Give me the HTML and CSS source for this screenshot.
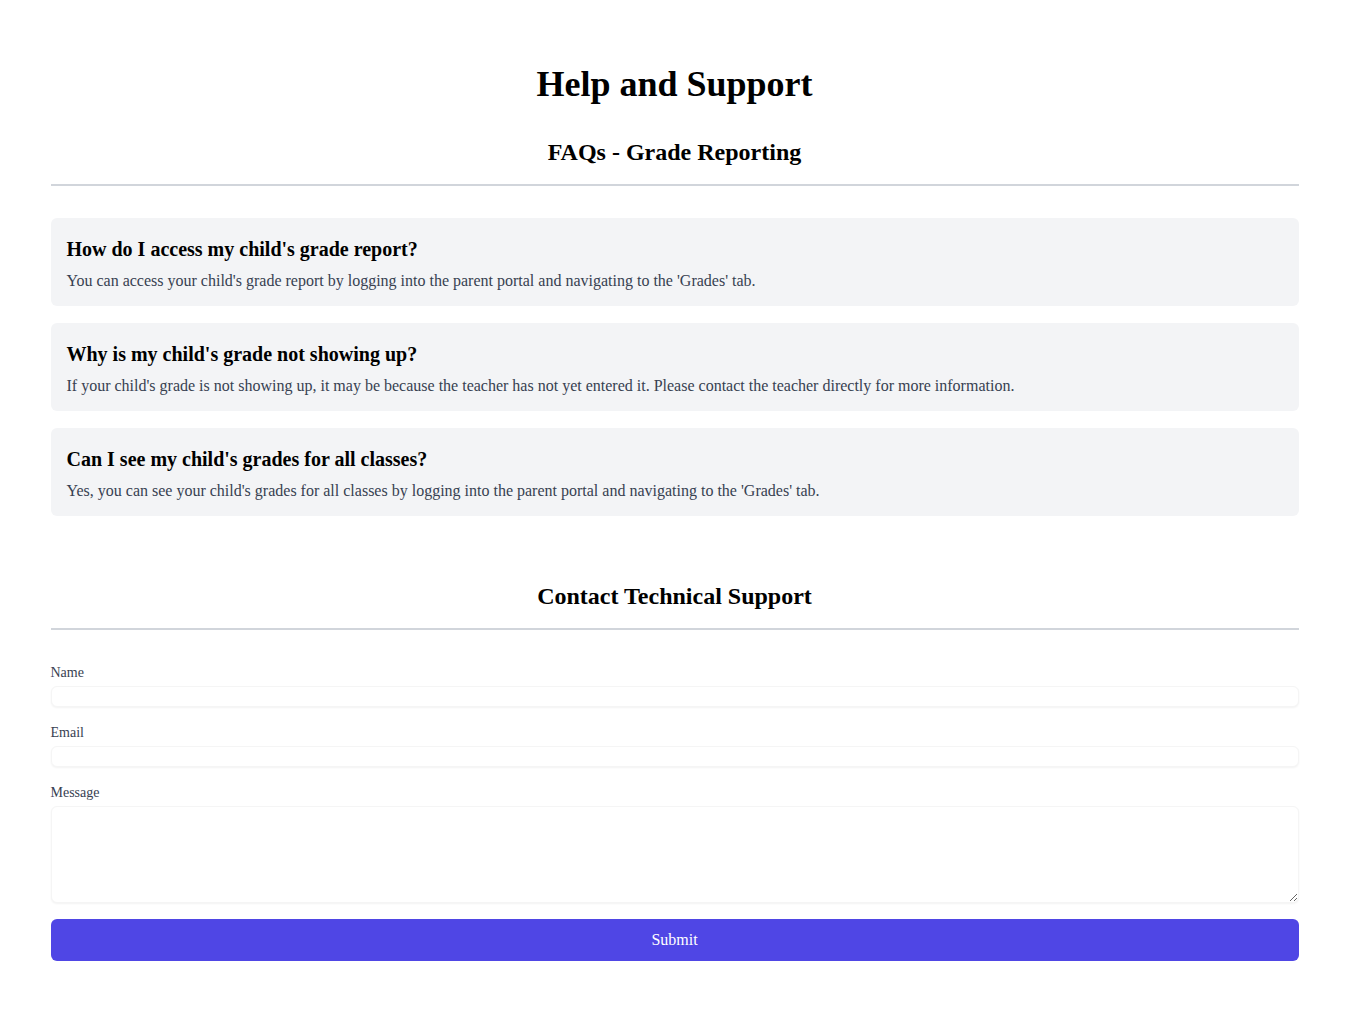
FILE: index.html
```html
<!DOCTYPE html>
<html lang="en">
<head>
<meta charset="utf-8">
<title>Help and Support</title>
<link rel="stylesheet" href="styles.css">
</head>
<body>
<main class="container">
  <h1 class="page-title">Help and Support</h1>

  <section class="section section-faq">
    <h2 class="section-title">FAQs - Grade Reporting</h2>
    <div class="faq-list">
      <div class="faq">
        <h3 class="faq-q">How do I access my child's grade report?</h3>
        <p class="faq-a">You can access your child's grade report by logging into the parent portal and navigating to the 'Grades' tab.</p>
      </div>
      <div class="faq">
        <h3 class="faq-q">Why is my child's grade not showing up?</h3>
        <p class="faq-a">If your child's grade is not showing up, it may be because the teacher has not yet entered it. Please contact the teacher directly for more information.</p>
      </div>
      <div class="faq">
        <h3 class="faq-q">Can I see my child's grades for all classes?</h3>
        <p class="faq-a">Yes, you can see your child's grades for all classes by logging into the parent portal and navigating to the 'Grades' tab.</p>
      </div>
    </div>
  </section>

  <section class="section">
    <h2 class="section-title">Contact Technical Support</h2>
    <form class="form">
      <div class="field">
        <label class="label" for="name">Name</label>
        <input class="input" id="name" type="text">
      </div>
      <div class="field">
        <label class="label" for="email">Email</label>
        <input class="input" id="email" type="email">
      </div>
      <div class="field">
        <label class="label" for="message">Message</label>
        <textarea class="input textarea" id="message"></textarea>
      </div>
      <button class="submit" type="button">Submit</button>
    </form>
  </section>
</main>
</body>
</html>
```

FILE: styles.css
```css
* { box-sizing: border-box; }
html, body { margin: 0; padding: 0; background: #fff; }
body {
  font-family: "Liberation Serif", "Times New Roman", serif;
  color: #000;
}
.container {
  max-width: 1280px;
  margin: 0 auto;
  padding: 64px 16px 32px;
}
.page-title {
  margin: 0 0 32px;
  font-size: 36px;
  line-height: 40px;
  font-weight: 700;
  text-align: center;
}
.section { margin-bottom: 48px; }
.section-faq { margin-bottom: 64px; }
.section-title {
  margin: 0 0 32px;
  padding-bottom: 16px;
  border-bottom: 2px solid #d1d5db;
  font-size: 24px;
  line-height: 32px;
  font-weight: 700;
  text-align: center;
}
.faq-list {
  display: flex;
  flex-direction: column;
  gap: 17px;
}
.faq {
  background: #f3f4f6;
  border-radius: 6px;
  padding: 17px 16px 15px;
}
.faq-q {
  margin: 0 0 8px;
  font-size: 20px;
  line-height: 28px;
  font-weight: 700;
}
.faq-a {
  margin: 0;
  font-size: 16px;
  line-height: 20px;
  color: #374151;
}
.form { padding-top: 1px; }
.field { margin-bottom: 16px; }
.label {
  display: block;
  font-size: 14px;
  line-height: 20px;
  color: #374151;
}
.input {
  display: block;
  width: 100%;
  margin-top: 3px;
  height: 21px;
  padding: 0;
  border: 1px solid #f5f5f5;
  border-radius: 6px;
  box-shadow: 0 1px 2px rgba(0,0,0,0.05);
  font: inherit;
  font-size: 14px;
  background: #fff;
}
.textarea {
  height: 97px;
  resize: vertical;
}
.submit {
  display: block;
  width: 100%;
  height: 42px;
  border: 0;
  border-radius: 6px;
  background: #4f46e5;
  color: #fff;
  font-family: "Liberation Serif", "Times New Roman", serif;
  font-size: 16px;
  cursor: pointer;
}
```
